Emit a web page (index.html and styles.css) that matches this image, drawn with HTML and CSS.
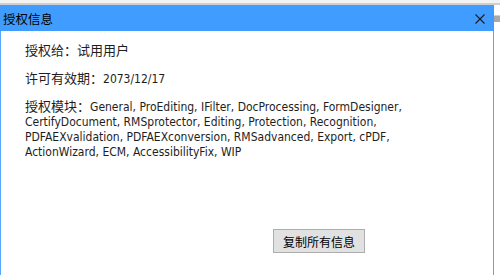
FILE: index.html
```html
<!DOCTYPE html>
<html lang="zh-CN">
<head>
<meta charset="UTF-8">
<title>授权信息</title>
<link rel="stylesheet" href="styles.css">
</head>
<body>
    <div class="topstrip"></div>
    <div class="desk">
        <div class="dialog">
            <div class="titlebar">
                <span class="title">授权信息</span>
                <span class="close">
                    <svg width="10" height="10" viewBox="0 0 10 10"><path d="M0.5 0.5L9.5 9.5M9.5 0.5L0.5 9.5" stroke="#1a1a1a" stroke-width="1.1" fill="none"/></svg>
                </span>
            </div>
            <div class="body">
                <div class="row"><span class="cjk">授权给：试用用户</span></div>
                <div class="row"><span class="cjk">许可有效期：</span>2073/12/17</div>
                <div class="row modules"><span class="cjk">授权模块：</span>General, ProEditing, IFilter, DocProcessing, FormDesigner, CertifyDocument, RMSprotector, Editing, Protection, Recognition, PDFAEXvalidation, PDFAEXconversion, RMSadvanced, Export, cPDF, ActionWizard, ECM, AccessibilityFix, WIP</div>
                <div class="actions">
                    <button class="copy">复制所有信息</button>
                </div>
            </div>
        </div>
        <div class="side">
            <div class="scrollbar"></div>
        </div>
    </div>
</body>
</html>
```

FILE: styles.css
```css
body {
    margin: 0;
    background-color: #ffffff;
    font-family: 'DejaVu Sans Condensed', 'Noto Sans CJK SC', sans-serif;
    overflow: hidden;
}
.topstrip {
    height: 3px;
    background-color: #f3f3f3;
    border-bottom: 2px solid #cfcfcf;
}
.desk {
    display: flex;
    height: 270px;
}
.dialog {
    width: 494px;
    display: flex;
    flex-direction: column;
    border-left: 1px solid #58a6ff;
    border-right: 1px solid #58a6ff;
    box-sizing: border-box;
}
.titlebar {
    height: 26px;
    background-color: #409cff;
    display: flex;
    align-items: center;
    justify-content: space-between;
    padding: 0 9px 0 3px;
    margin: 0 -1px;
}
.title {
    font-family: 'Noto Sans CJK SC', sans-serif;
    font-size: 12.5px;
    color: #000000;
}
.close {
    display: flex;
    padding-top: 1px;
}
.body {
    flex: 1;
    padding: 11px 30px 0 24px;
    font-size: 12px;
    color: #1e1e1e;
}
.row {
    line-height: 16px;
    margin-bottom: 11px;
}
.cjk {
    display: inline-block;
    font-family: 'Noto Sans CJK SC', sans-serif;
    font-size: 13px;
}
.modules {
    margin-top: 2px;
    line-height: 15px;
    padding-right: 40px;
}
.actions {
    display: flex;
    padding-left: 248px;
    margin-top: 69px;
}
.copy {
    width: 92px;
    height: 24px;
    background-color: #e1e1e1;
    border: 1px solid #adadad;
    font-family: 'Noto Sans CJK SC', sans-serif;
    font-size: 12px;
    color: #000000;
    padding: 0;
}
.side {
    flex: 1;
}
.scrollbar {
    margin-top: 10px;
    height: 6px;
    background-color: #a9a9a9;
    border-top: 1px solid #d0d0d0;
}
```
